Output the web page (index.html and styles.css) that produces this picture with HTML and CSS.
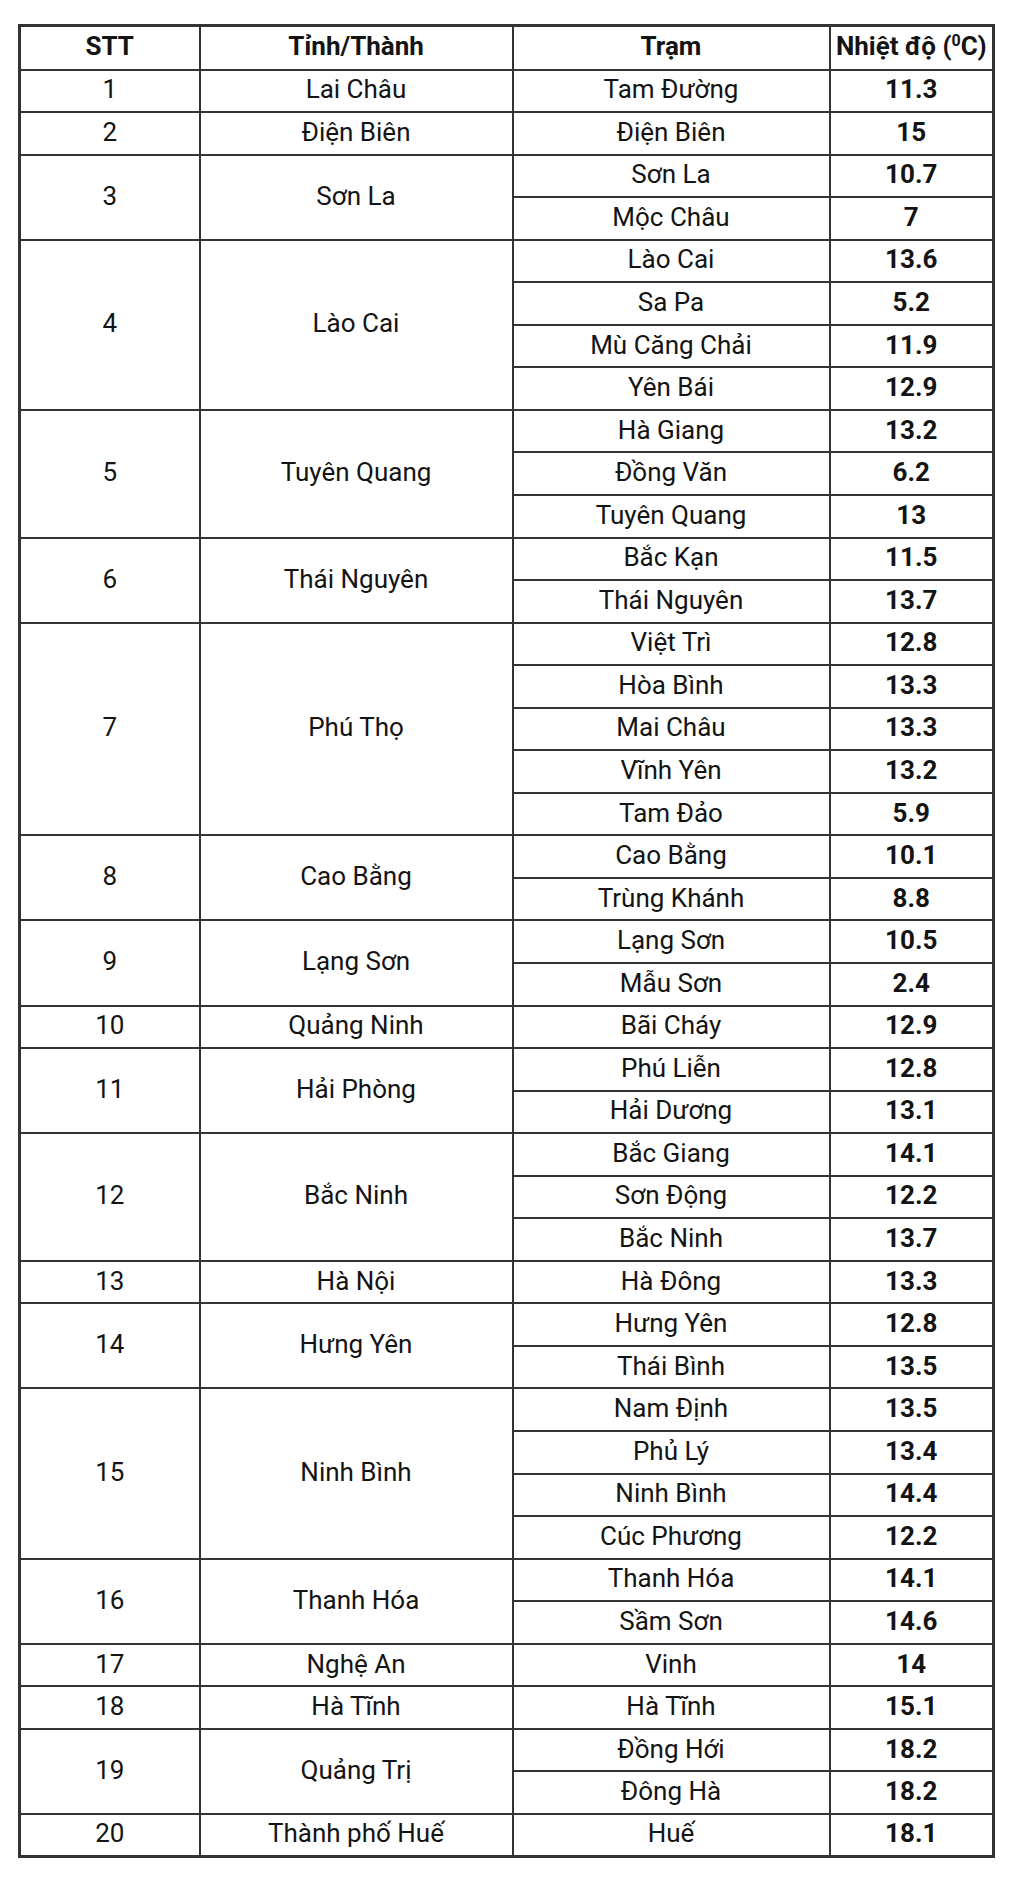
FILE: index.html
```html
<!DOCTYPE html>
<html lang="vi">
<head>
<meta charset="utf-8">
<title>Nhiệt độ</title>
<link rel="stylesheet" href="styles.css">
</head>
<body>
<table class="temp">
<colgroup>
<col class="c-stt"><col class="c-prov"><col class="c-station"><col class="c-temp">
</colgroup>
<thead>
<tr><th>STT</th><th>Tỉnh/Thành</th><th>Trạm</th><th>Nhiệt độ (<sup>0</sup>C)</th></tr>
</thead>
<tbody>
<tr><td>1</td><td>Lai Châu</td><td>Tam Đường</td><td class="num">11.3</td></tr>
<tr><td>2</td><td>Điện Biên</td><td>Điện Biên</td><td class="num">15</td></tr>
<tr><td rowspan="2">3</td><td rowspan="2">Sơn La</td><td>Sơn La</td><td class="num">10.7</td></tr>
<tr><td>Mộc Châu</td><td class="num">7</td></tr>
<tr><td rowspan="4">4</td><td rowspan="4">Lào Cai</td><td>Lào Cai</td><td class="num">13.6</td></tr>
<tr><td>Sa Pa</td><td class="num">5.2</td></tr>
<tr><td>Mù Căng Chải</td><td class="num">11.9</td></tr>
<tr><td>Yên Bái</td><td class="num">12.9</td></tr>
<tr><td rowspan="3">5</td><td rowspan="3">Tuyên Quang</td><td>Hà Giang</td><td class="num">13.2</td></tr>
<tr><td>Đồng Văn</td><td class="num">6.2</td></tr>
<tr><td>Tuyên Quang</td><td class="num">13</td></tr>
<tr><td rowspan="2">6</td><td rowspan="2">Thái Nguyên</td><td>Bắc Kạn</td><td class="num">11.5</td></tr>
<tr><td>Thái Nguyên</td><td class="num">13.7</td></tr>
<tr><td rowspan="5">7</td><td rowspan="5">Phú Thọ</td><td>Việt Trì</td><td class="num">12.8</td></tr>
<tr><td>Hòa Bình</td><td class="num">13.3</td></tr>
<tr><td>Mai Châu</td><td class="num">13.3</td></tr>
<tr><td>Vĩnh Yên</td><td class="num">13.2</td></tr>
<tr><td>Tam Đảo</td><td class="num">5.9</td></tr>
<tr><td rowspan="2">8</td><td rowspan="2">Cao Bằng</td><td>Cao Bằng</td><td class="num">10.1</td></tr>
<tr><td>Trùng Khánh</td><td class="num">8.8</td></tr>
<tr><td rowspan="2">9</td><td rowspan="2">Lạng Sơn</td><td>Lạng Sơn</td><td class="num">10.5</td></tr>
<tr><td>Mẫu Sơn</td><td class="num">2.4</td></tr>
<tr><td>10</td><td>Quảng Ninh</td><td>Bãi Cháy</td><td class="num">12.9</td></tr>
<tr><td rowspan="2">11</td><td rowspan="2">Hải Phòng</td><td>Phú Liễn</td><td class="num">12.8</td></tr>
<tr><td>Hải Dương</td><td class="num">13.1</td></tr>
<tr><td rowspan="3">12</td><td rowspan="3">Bắc Ninh</td><td>Bắc Giang</td><td class="num">14.1</td></tr>
<tr><td>Sơn Động</td><td class="num">12.2</td></tr>
<tr><td>Bắc Ninh</td><td class="num">13.7</td></tr>
<tr><td>13</td><td>Hà Nội</td><td>Hà Đông</td><td class="num">13.3</td></tr>
<tr><td rowspan="2">14</td><td rowspan="2">Hưng Yên</td><td>Hưng Yên</td><td class="num">12.8</td></tr>
<tr><td>Thái Bình</td><td class="num">13.5</td></tr>
<tr><td rowspan="4">15</td><td rowspan="4">Ninh Bình</td><td>Nam Định</td><td class="num">13.5</td></tr>
<tr><td>Phủ Lý</td><td class="num">13.4</td></tr>
<tr><td>Ninh Bình</td><td class="num">14.4</td></tr>
<tr><td>Cúc Phương</td><td class="num">12.2</td></tr>
<tr><td rowspan="2">16</td><td rowspan="2">Thanh Hóa</td><td>Thanh Hóa</td><td class="num">14.1</td></tr>
<tr><td>Sầm Sơn</td><td class="num">14.6</td></tr>
<tr><td>17</td><td>Nghệ An</td><td>Vinh</td><td class="num">14</td></tr>
<tr><td>18</td><td>Hà Tĩnh</td><td>Hà Tĩnh</td><td class="num">15.1</td></tr>
<tr><td rowspan="2">19</td><td rowspan="2">Quảng Trị</td><td>Đồng Hới</td><td class="num">18.2</td></tr>
<tr><td>Đông Hà</td><td class="num">18.2</td></tr>
<tr><td>20</td><td>Thành phố Huế</td><td>Huế</td><td class="num">18.1</td></tr>
</tbody>
</table>
</body>
</html>
```
FILE: styles.css
```css
html, body {
  background: #ffffff;
}
body {
  margin: 24px 0 0 18px;
  font-family: Roboto, "Noto Sans", "Liberation Sans", sans-serif;
  color: #141414;
}
.temp {
  border-collapse: collapse;
  width: 974px;
  table-layout: fixed;
  border: 3px solid #333333;
  font-size: 26px;
  line-height: 30px;
}
.c-stt { width: 180px; }
.c-prov { width: 313px; }
.c-station { width: 317px; }
.c-temp { width: 164px; }
.temp th,
.temp td {
  border: 2px solid #333333;
  text-align: center;
  vertical-align: middle;
  padding: 0 2px 3px;
  white-space: nowrap;
}
.temp thead tr {
  height: 44px;
}
.temp tbody tr {
  height: 42.55px;
}
.temp th {
  font-weight: 700;
}
.temp th sup {
  font-size: 16px;
  line-height: 0;
  vertical-align: 9px;
}
.temp .num {
  font-weight: 700;
}
```
